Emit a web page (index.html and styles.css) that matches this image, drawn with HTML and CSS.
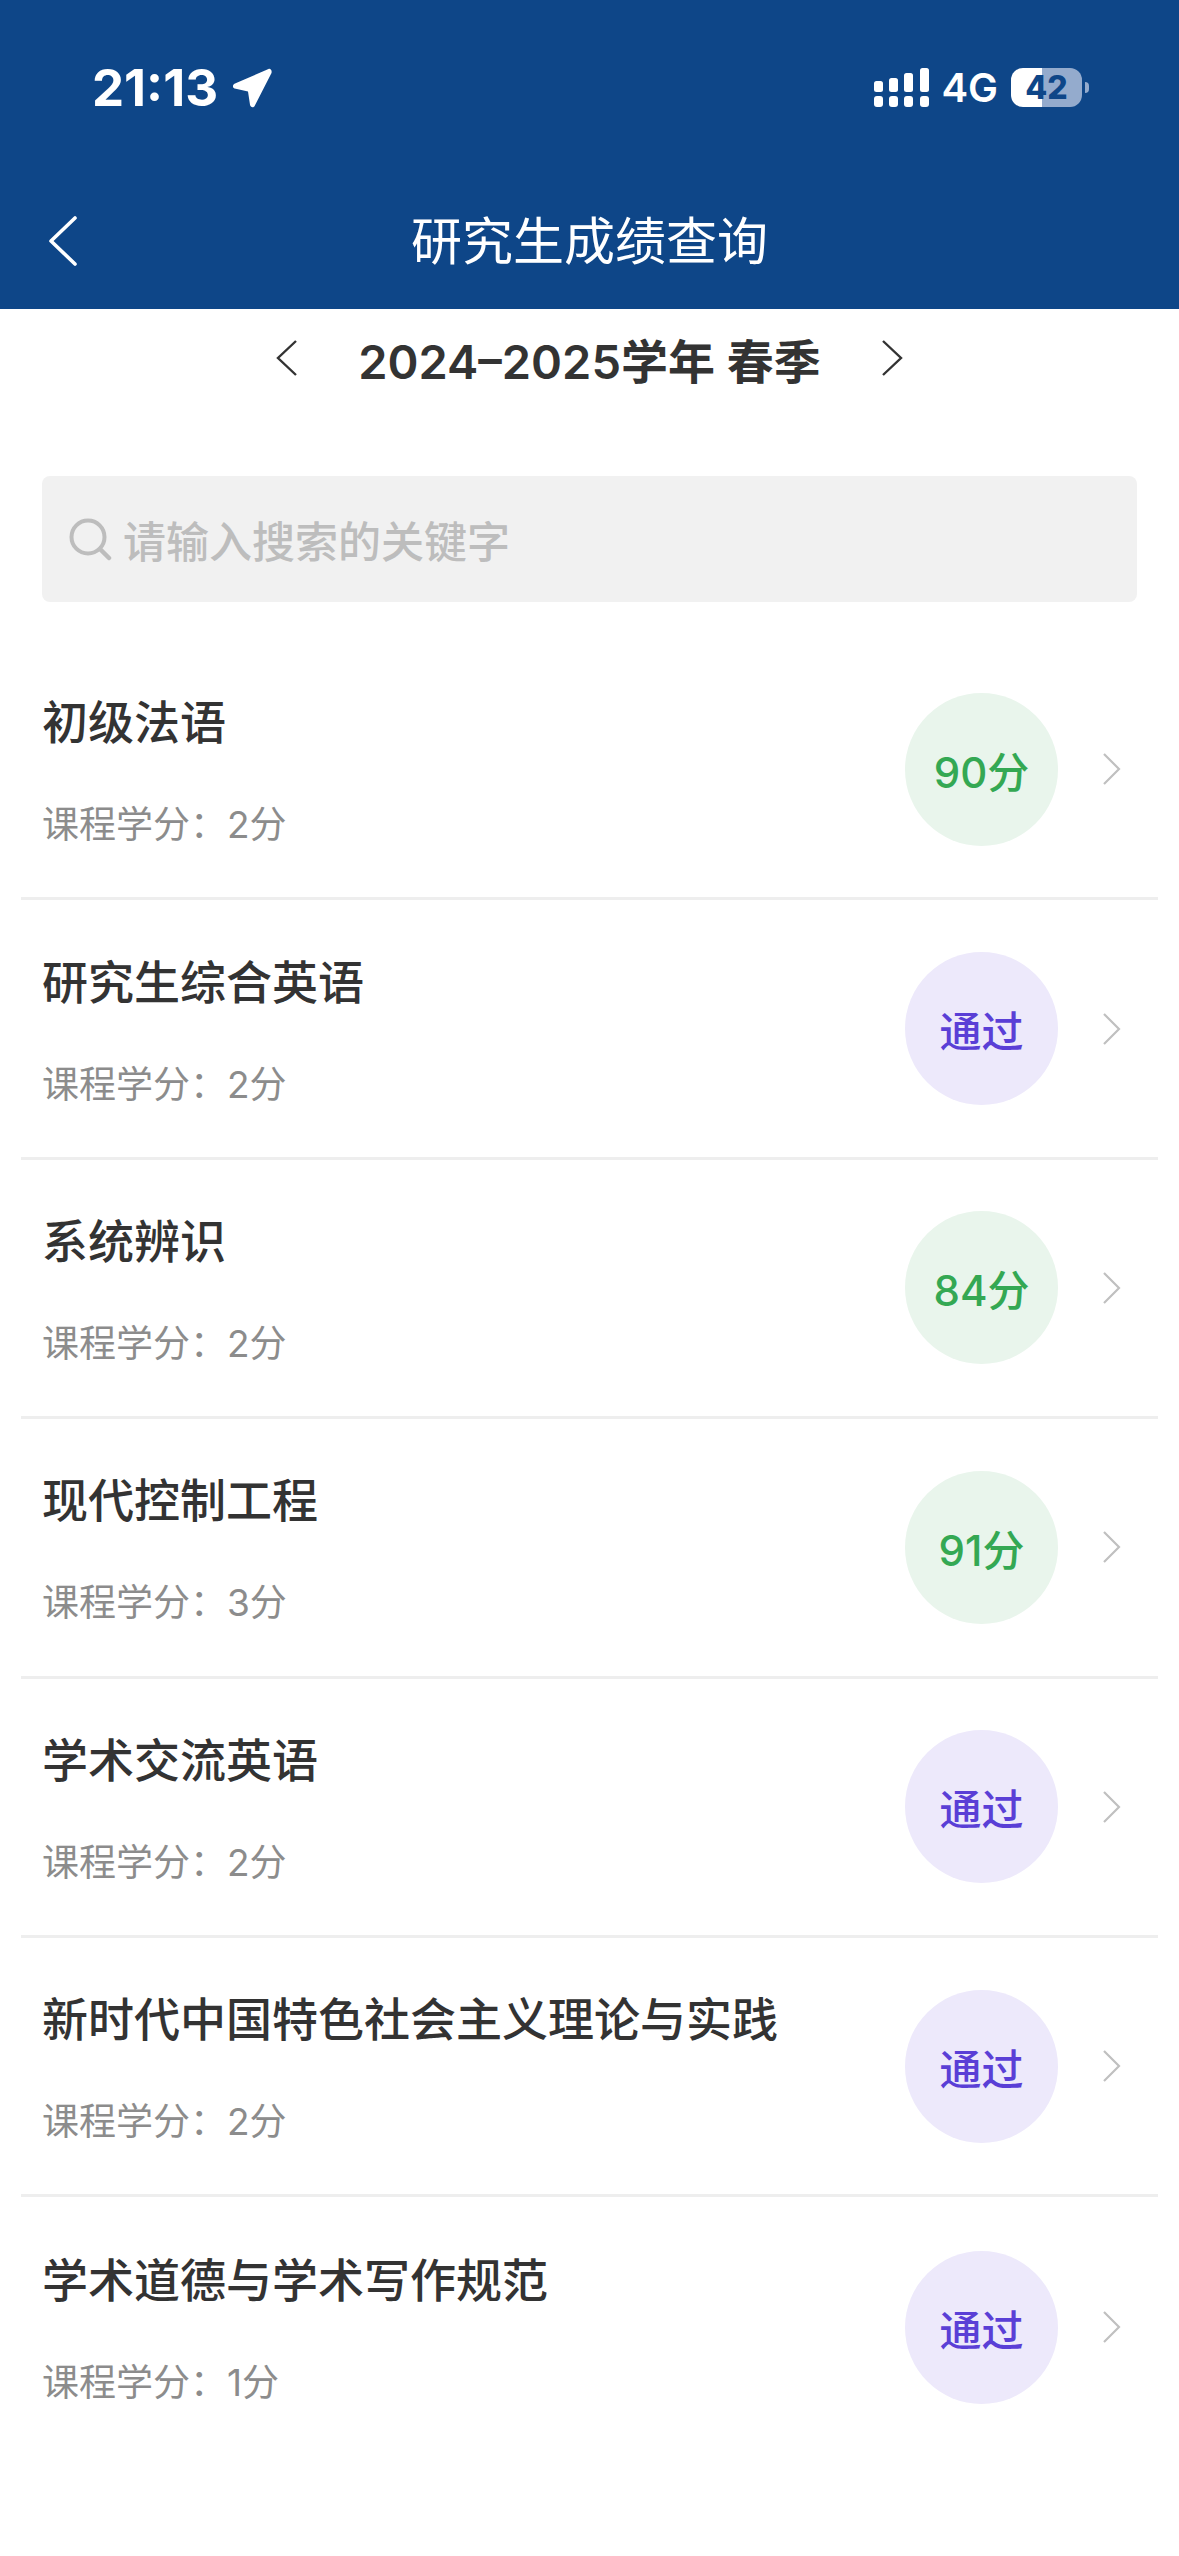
FILE: index.html
```html
<!DOCTYPE html>
<html lang="zh-CN">
<head>
    <meta charset="UTF-8">
    <meta name="viewport" content="width=device-width, initial-scale=1.0">
    <title>研究生成绩查询</title>
    <link rel="stylesheet" href="styles.css">
</head>
<body>
    <header class="top">
        <div class="status">
            <div class="status-left">
                <span class="time">21:13</span>
                <svg class="arrow" viewBox="0 0 40 40"><path d="M36.500 1 3 15.500c-3.200 1.400-2.500 5 .8 5.300L16 23.500l2 13.300c.5 3 4 3.300 5 .4L39.500 5c.7-2.500-1-4.800-3-4z" fill="#fff"/></svg>
            </div>
            <div class="status-right">
                <svg class="signal" viewBox="0 0 55 39" fill="#fff">
                    <rect x="0" y="13" width="9" height="11" rx="2.500"/>
                    <rect x="15" y="10" width="9" height="14" rx="2.500"/>
                    <rect x="30" y="5" width="9" height="19" rx="2.500"/>
                    <rect x="46" y="0" width="9" height="24" rx="2.500"/>
                    <rect x="0" y="28" width="9" height="11" rx="3"/>
                    <rect x="15" y="28" width="9" height="11" rx="3"/>
                    <rect x="30" y="28" width="9" height="11" rx="3"/>
                    <rect x="46" y="28" width="9" height="11" rx="3"/>
                </svg>
                <span class="net">4G</span>
                <span class="battery">42</span>
                <span class="battery-cap"></span>
            </div>
        </div>
        <div class="nav">
            <svg class="back" viewBox="0 0 30 50"><path d="M27 2 3 25l24 23" fill="none" stroke="#fff" stroke-width="3.600" stroke-linecap="round" stroke-linejoin="round"/></svg>
            <h1>研究生成绩查询</h1>
        </div>
    </header>

    <div class="term">
        <svg class="term-arrow" viewBox="0 0 24 38"><path d="M21 2 3 19l18 17" fill="none" stroke="#333" stroke-width="2.400"/></svg>
        <span class="term-name">2024–2025学年 春季</span>
        <svg class="term-arrow" viewBox="0 0 24 38"><path d="M3 2l18 17L3 36" fill="none" stroke="#333" stroke-width="2.400"/></svg>
    </div>

    <div class="search">
        <svg class="search-icon" viewBox="0 0 44 44"><circle cx="20" cy="20" r="16.500" fill="none" stroke="#bdbdbd" stroke-width="4"/><path d="m32 32 9 9" stroke="#bdbdbd" stroke-width="4.500" stroke-linecap="round"/></svg>
        <span>请输入搜索的关键字</span>
    </div>

    <ul class="list">
        <li class="row">
            <div class="info"><div class="name">初级法语</div><div class="credit">课程学分：2分</div></div>
            <div class="badge score">90分</div>
            <svg class="more" viewBox="0 0 20 34"><path d="m2 2 15 15L2 32" fill="none" stroke="#c0c0c0" stroke-width="2.200"/></svg>
        </li>
        <li class="row">
            <div class="info"><div class="name">研究生综合英语</div><div class="credit">课程学分：2分</div></div>
            <div class="badge pass">通过</div>
            <svg class="more" viewBox="0 0 20 34"><path d="m2 2 15 15L2 32" fill="none" stroke="#c0c0c0" stroke-width="2.200"/></svg>
        </li>
        <li class="row">
            <div class="info"><div class="name">系统辨识</div><div class="credit">课程学分：2分</div></div>
            <div class="badge score">84分</div>
            <svg class="more" viewBox="0 0 20 34"><path d="m2 2 15 15L2 32" fill="none" stroke="#c0c0c0" stroke-width="2.200"/></svg>
        </li>
        <li class="row">
            <div class="info"><div class="name">现代控制工程</div><div class="credit">课程学分：3分</div></div>
            <div class="badge score">91分</div>
            <svg class="more" viewBox="0 0 20 34"><path d="m2 2 15 15L2 32" fill="none" stroke="#c0c0c0" stroke-width="2.200"/></svg>
        </li>
        <li class="row">
            <div class="info"><div class="name">学术交流英语</div><div class="credit">课程学分：2分</div></div>
            <div class="badge pass">通过</div>
            <svg class="more" viewBox="0 0 20 34"><path d="m2 2 15 15L2 32" fill="none" stroke="#c0c0c0" stroke-width="2.200"/></svg>
        </li>
        <li class="row">
            <div class="info"><div class="name">新时代中国特色社会主义理论与实践</div><div class="credit">课程学分：2分</div></div>
            <div class="badge pass">通过</div>
            <svg class="more" viewBox="0 0 20 34"><path d="m2 2 15 15L2 32" fill="none" stroke="#c0c0c0" stroke-width="2.200"/></svg>
        </li>
        <li class="row">
            <div class="info"><div class="name">学术道德与学术写作规范</div><div class="credit">课程学分：1分</div></div>
            <div class="badge pass">通过</div>
            <svg class="more" viewBox="0 0 20 34"><path d="m2 2 15 15L2 32" fill="none" stroke="#c0c0c0" stroke-width="2.200"/></svg>
        </li>
    </ul>
</body>
</html>
```

FILE: styles.css
```css
* {
    box-sizing: border-box;
}
body {
    margin: 0;
    background-color: #ffffff;
    font-family: Inter, "Noto Sans CJK SC", sans-serif;
    color: #333333;
}
.top {
    height: 309px;
    background-color: #0e4688;
    color: #ffffff;
    padding-top: 68px;
}
.status {
    height: 39px;
    padding: 0 90px 0 92px;
    display: flex;
    justify-content: space-between;
    align-items: center;
}
.status-left {
    display: flex;
    align-items: center;
    gap: 14px;
}
.time {
    font-size: 51px;
    font-weight: 700;
}
.arrow {
    width: 40px;
    height: 40px;
}
.status-right {
    display: flex;
    align-items: center;
}
.signal {
    width: 55px;
    height: 39px;
    margin-right: 12px;
}
.net {
    font-size: 40px;
    font-weight: 600;
    margin-right: 13px;
}
.battery {
    width: 71px;
    height: 39px;
    border-radius: 12px;
    background: linear-gradient(90deg, #ffffff 43%, #94abcd 43%);
    color: #0e4688;
    font-size: 32px;
    font-weight: 800;
    line-height: 39px;
    text-align: center;
}
.battery-cap {
    width: 4px;
    height: 11px;
    margin-left: 3px;
    border-radius: 0 4px 4px 0;
    background-color: #94abcd;
}
.nav {
    margin-top: 100px;
    padding-left: 48px;
    height: 50px;
    display: grid;
    grid-template-columns: 1fr auto 1fr;
    align-items: center;
}
.back {
    width: 30px;
    height: 50px;
}
.nav h1 {
    margin: -6px 0 0;
    font-size: 51px;
    font-weight: 400;
    transform: translateX(-24px);
}
.term {
    height: 98px;
    display: flex;
    justify-content: center;
    align-items: center;
    gap: 59px;
}
.term-arrow {
    width: 24px;
    height: 38px;
}
.term-name {
    font-size: 47px;
    font-weight: 600;
}
.search {
    margin: 69px 42px 0;
    height: 126px;
    padding-left: 26px;
    border-radius: 8px;
    background-color: #f1f1f1;
    display: flex;
    align-items: center;
    gap: 11px;
    font-size: 43px;
    font-weight: 500;
    color: #bdbdbd;
}
.search-icon {
    width: 44px;
    height: 44px;
}
.list {
    list-style: none;
    margin: 39px 21px 0;
    padding: 0;
}
.row {
    height: 259.4px;
    padding: 0 36px 0 21px;
    border-bottom: 3px solid #eeeeee;
    display: flex;
    align-items: center;
}
.row:last-child {
    border-bottom: none;
}
.info {
    flex: 1;
    padding-top: 4px;
}
.name {
    font-size: 46px;
    font-weight: 500;
    line-height: 60px;
}
.credit {
    margin-top: 48px;
    font-size: 37px;
    line-height: 50px;
    color: #8c8c8c;
}
.badge {
    width: 153px;
    height: 153px;
    border-radius: 50%;
    display: flex;
    justify-content: center;
    align-items: center;
    font-size: 42px;
    font-weight: 500;
}
.score {
    background-color: #e9f5ec;
    color: #34a853;
}
.pass {
    background-color: #ede9fb;
    color: #5a3fd6;
}
.more {
    width: 20px;
    height: 34px;
    margin-left: 44px;
}
```
